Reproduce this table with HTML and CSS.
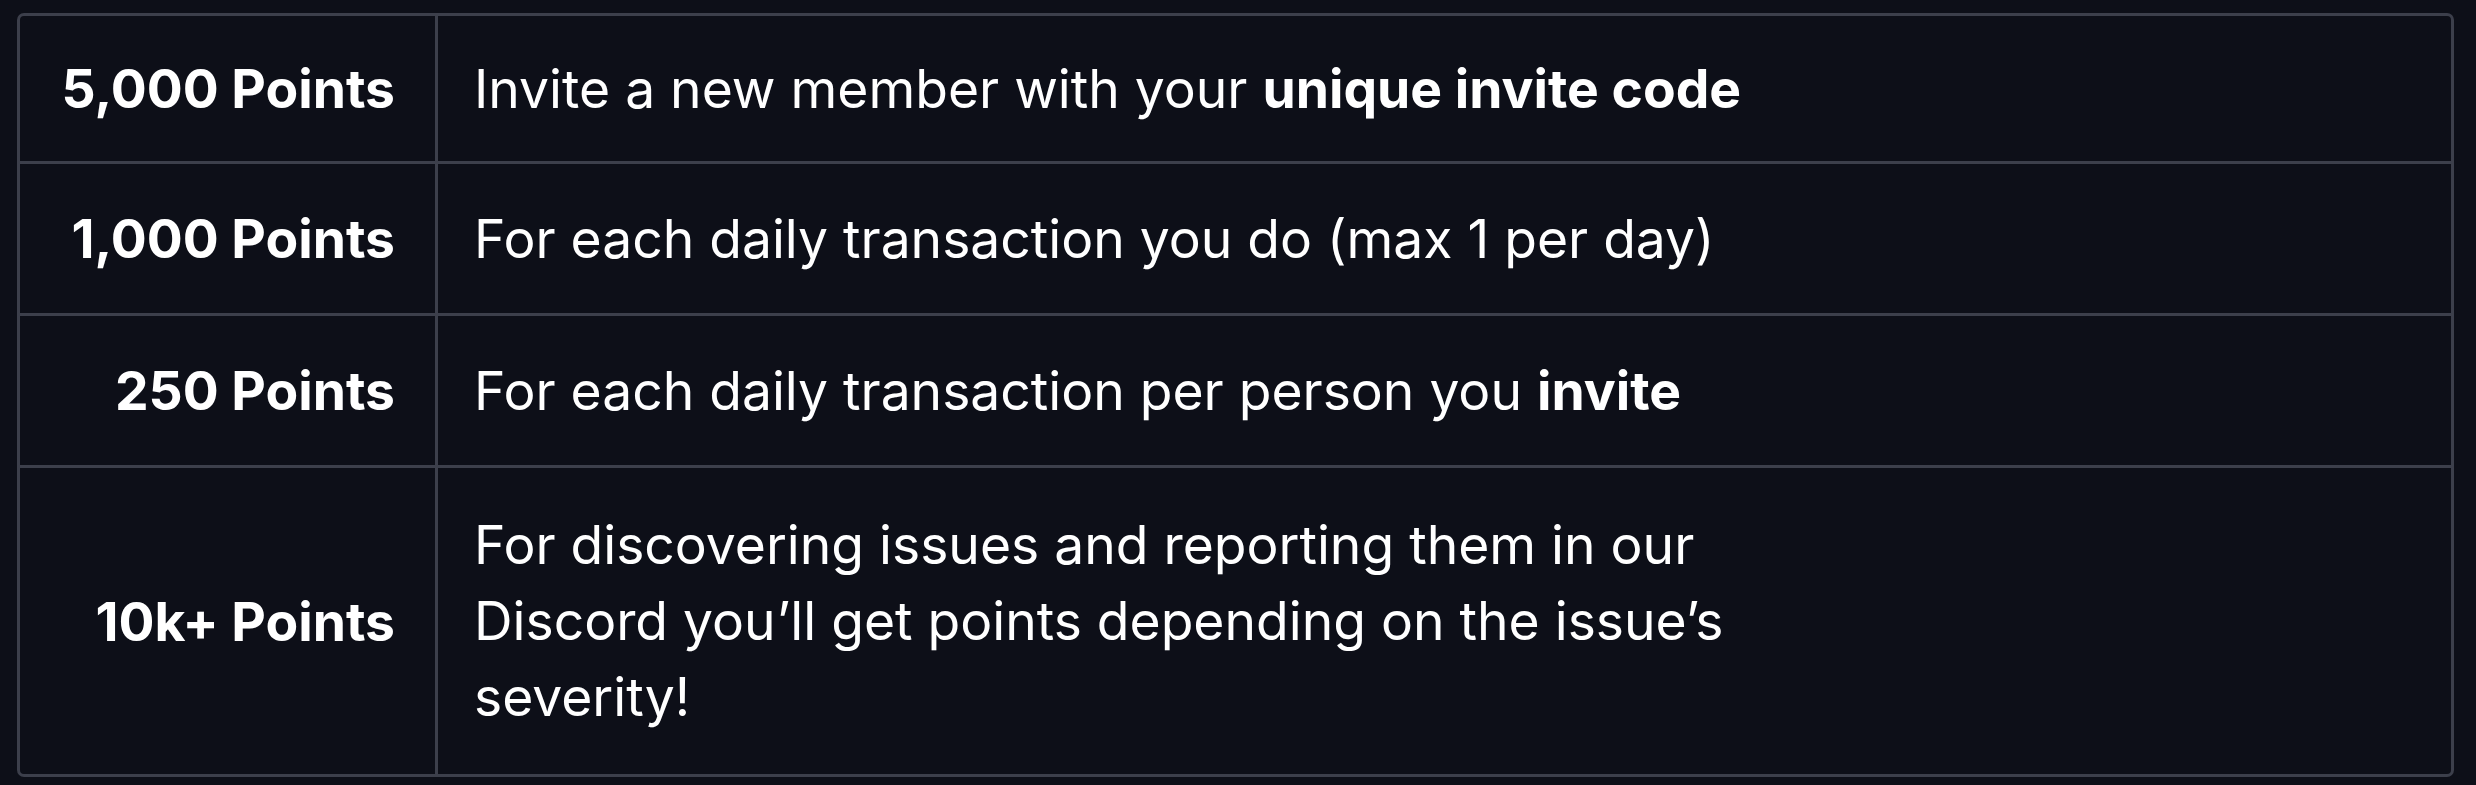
FILE: index.html
```html
<!DOCTYPE html>
<html lang="en">
<head>
<meta charset="utf-8">
<title>Points</title>
<link rel="stylesheet" href="styles.css">
</head>
<body>
<div class="table">
  <div class="row first">
    <div class="pts">5,000 Points</div>
    <div class="desc"><span class="text">Invite a new member with your <strong>unique invite code</strong></span></div>
  </div>
  <div class="row">
    <div class="pts">1,000 Points</div>
    <div class="desc"><span class="text">For each daily transaction you do (max 1 per day)</span></div>
  </div>
  <div class="row">
    <div class="pts">250 Points</div>
    <div class="desc"><span class="text">For each daily transaction per person you <strong>invite</strong></span></div>
  </div>
  <div class="row last">
    <div class="pts">10k+ Points</div>
    <div class="desc"><span class="text">For discovering issues and reporting them in our Discord you’ll get points depending on the issue’s severity!</span></div>
  </div>
</div>
</body>
</html>
```
FILE: styles.css
```css
html, body {
  margin: 0;
  padding: 0;
  background: #0d0f18;
}
body {
  padding: 13px 22px 9px 17px;
  font-family: Inter, "Noto Sans", sans-serif;
  color: #ffffff;
}
.table {
  border: 3px solid #3c3f4b;
  border-radius: 7px;
  background: #0d0f18;
}
.row {
  display: grid;
  grid-template-columns: 418px 1fr;
  min-height: 149px;
  border-bottom: 3px solid #3c3f4b;
}
.row.first {
  min-height: 145px;
}
.row.last {
  border-bottom: none;
  min-height: 306px;
}
.pts {
  display: flex;
  align-items: center;
  justify-content: flex-end;
  padding-right: 40px;
  font-weight: 700;
  font-size: 53.4px;
  border-right: 3px solid #3c3f4b;
}
.desc {
  display: flex;
  align-items: center;
  padding-left: 36px;
  font-size: 53.4px;
  line-height: 76px;
}
.text {
  max-width: 1340px;
}
strong {
  font-weight: 700;
}
```
